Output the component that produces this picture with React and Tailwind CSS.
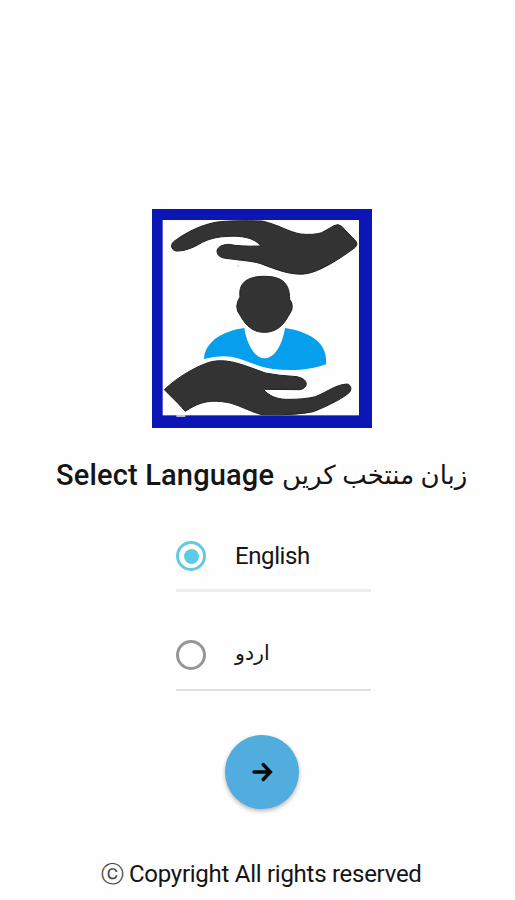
function Logo() {
  return (
    <svg className="mt-[209px] ml-[152px] h-[219px] w-[220px] shrink-0" viewBox="21 27 660 657" aria-label="Caring hands">
      <rect x="21" y="27" width="660" height="657" fill="#0b16b4" />
      <rect x="53" y="60" width="589" height="586" fill="#fefefe" />
      <g fill="#333333" stroke="#222222" strokeWidth="3" strokeLinejoin="round">
        <path d="M80 142 Q77 129 94 119 C130 93 175 73 217 66 Q265 60 351 63 C398 73 431 96 467 102 Q505 106 530 98 L567 77 Q580 70 590 79 L633 124 Q640 135 628 144 C583 178 523 215 485 221 C440 228 395 209 347 191 Q330 185 290 181 L236 174 Q215 169 216 151 Q222 134 251 133 Q285 140 347 138 C329 112 286 107 252 109 Q204 110 172 127 C143 145 116 154 93 153 Q83 151 80 142 Z" />
        <path d="M294 360 L278 334 Q272 319 279 302 L285 291 C280 253 301 229 358 229 C415 229 434 253 434 298 Q445 311 440 331 L423 360 C407 385 384 397 358 397 C332 397 310 385 294 360 Z" />
        <path d="M58 569 C96 532 158 496 199 485 C253 473 306 500 361 519 Q401 527 456 530 Q483 536 484 551 Q483 566 464 569 L355 568 C372 588 395 597 422 598 Q475 599 511 590 C551 574 571 554 607 552 Q622 557 616 574 C602 591 551 617 505 635 Q450 647 350 644 C308 632 280 614 246 607 C200 600 168 602 121 634 Q109 621 100 611 Z" />
      </g>
      <path d="M177 477 C180 428 226 394 298 384 C303 423 326 475 358 475 C391 475 413 430 420 384 C490 395 550 426 543 493 C500 510 438 514 383 507 C333 500 301 477 259 470 Q217 465 177 477 Z" fill="#069fee" />
      <path d="M94 648 H121" stroke="#d8d9ef" strokeWidth="5" />
      <circle cx="280" cy="198" r="3" fill="#dddddd" />
    </svg>
  );
}

function Radio({ checked }) {
  return (
    <span className={`flex size-[30px] items-center justify-center rounded-full border-[3px] ${checked ? "border-[#65cae1]" : "border-[#969696]"}`}>
      {checked && <span className="size-[15px] rounded-full bg-[#5bcbe8]" />}
    </span>
  );
}

export default function App() {
  return (
    <main className="flex h-[900px] w-[515px] flex-col overflow-hidden bg-[#fefefe] font-['Roboto','DejaVu_Sans',sans-serif] text-[#151515]">
      <Logo />
      <h1 className="mt-[27px] ml-14 flex h-10 items-center whitespace-nowrap">
        <span className="w-[226px] text-[29px] leading-10 font-medium tracking-[0.17px]">Select Language</span>
        <span dir="rtl" lang="ur" className="text-[26px] leading-10 font-normal">زبان منتخب کریں</span>
      </h1>
      <div className="mt-[46px] ml-44 flex w-[195px] flex-col">
        <button type="button" className="flex h-[51px] items-start border-b-[3px] border-[#ededed]">
          <Radio checked />
          <span className="ml-[29px] text-[24px] leading-[30px] tracking-[-0.4px]">English</span>
        </button>
        <button type="button" className="mt-[48px] flex h-[51px] items-start border-b-2 border-[#e0e0e0]">
          <Radio />
          <span dir="rtl" lang="ur" className="ml-[29px] text-[20.5px] leading-[27px]">اردو</span>
        </button>
      </div>
      <button type="button" aria-label="Continue" className="mt-[44px] ml-[225px] flex size-[74px] shrink-0 items-center justify-center rounded-full bg-[#50addd] shadow-[0_2px_4px_rgba(0,0,0,0.3)]">
        <svg className="size-6" viewBox="0 0 24 24" fill="none" stroke="#080808" strokeWidth="3.4" strokeLinecap="round" strokeLinejoin="miter">
          <path d="M4 12H20M13.2 4.5L20.3 12L13.2 19.5" />
        </svg>
      </button>
      <footer className="mt-[50px] ml-[101px] flex h-[30px] items-center text-[24px] leading-[30px] whitespace-nowrap">
        <span className="w-7 font-['DejaVu_Sans'] text-[23px] text-[#444444]">ⓒ</span>
        <span className="tracking-[-0.27px]">Copyright All rights reserved</span>
      </footer>
    </main>
  );
}
